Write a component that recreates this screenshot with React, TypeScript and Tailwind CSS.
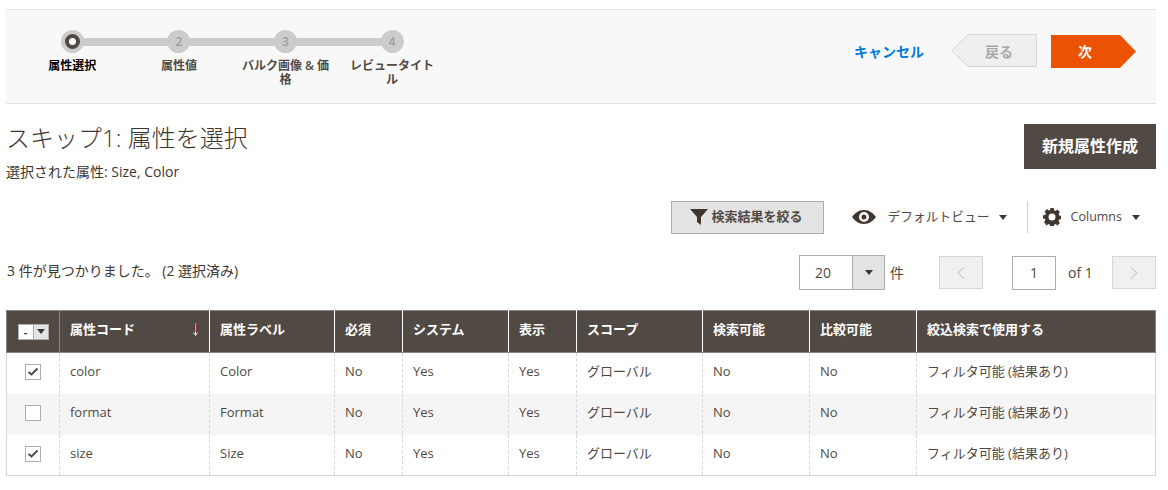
import { ChevronLeft, ChevronRight } from "lucide-react";

const font = "font-['Open_Sans','Noto_Sans_CJK_JP',sans-serif]";

const steps = [
  { n: "", label: "属性選択", active: true },
  { n: "2", label: "属性値" },
  { n: "3", label: "バルク画像 & 価格" },
  { n: "4", label: "レビュータイトル" },
];

const columns = [
  { label: "属性コード", width: "w-[150px]" },
  { label: "属性ラベル", width: "w-[125px]" },
  { label: "必須", width: "w-[68px]" },
  { label: "システム", width: "w-[106px]" },
  { label: "表示", width: "w-[68px]" },
  { label: "スコープ", width: "w-[126px]" },
  { label: "検索可能", width: "w-[107px]" },
  { label: "比較可能", width: "w-[107px]" },
  { label: "絞込検索で使用する", width: "w-[239px]" },
];

const rows = [
  { code: "color", label: "Color", checked: true },
  { code: "format", label: "Format", checked: false },
  { code: "size", label: "Size", checked: true },
];

const Caret = ({ className = "" }: { className?: string }) => (
  <span
    className={`inline-block h-0 w-0 border-x-[4px] border-t-[5px] border-x-transparent border-t-[#41362f] ${className}`}
  />
);

const Stepper = () => (
  <ol className="flex w-[450px] pl-[13px]">
    {steps.map((step, index) => (
      <li key={step.label} className="relative flex w-[106.6px] shrink-0 flex-col items-center">
        {index < steps.length - 1 && (
          <span className="absolute top-[8px] left-1/2 h-[8px] w-full bg-[#cccccc]" />
        )}
        <span className="relative flex h-[23px] w-[23px] items-center justify-center rounded-full bg-[#cccccc] text-[12px] font-semibold text-[#a09c99]">
          {step.active ? (
            <span className="h-[15px] w-[15px] rounded-full border-[4px] border-[#514943] bg-white" />
          ) : (
            step.n
          )}
        </span>
        <span
          className={`mt-[6px] w-[92px] text-center text-[12px] leading-[14px] font-semibold ${
            step.active ? "text-[#000000]" : "text-[#514943]"
          }`}
        >
          {step.label}
        </span>
      </li>
    ))}
  </ol>
);

const Wizard = () => (
  <div className="flex h-[95px] items-start justify-between border-y border-[#e3e3e3] bg-[#f8f8f8] pt-[20px] pr-[19px]">
    <Stepper />
    <div className="flex items-center pt-[4px]">
      <span className="mr-[27px] text-[14px] font-semibold text-[#007bdb]">キャンセル</span>
      <svg width="86" height="34" viewBox="0 0 86 34" className="-mr-[86px]">
        <path d="M17 .5H85.500V32.500H17L.5 16.500Z" fill="#efefef" stroke="#d6d6d6" />
      </svg>
      <span className="relative w-[86px] pl-[10px] text-center text-[14px] font-semibold text-[#a8a8a8]">戻る</span>
      <svg width="86" height="33" viewBox="0 0 86 33" className="ml-[14px] -mr-[86px]">
        <path d="M0 0H69L85 16.500L69 33H0Z" fill="#eb5202" />
      </svg>
      <span className="relative w-[86px] pr-[18px] text-center text-[14px] font-semibold text-white">次</span>
    </div>
  </div>
);

const Toolbar = () => (
  <div className="mt-[18px] flex h-[34px] items-center justify-end pr-[28px]">
    <button className="flex h-[33px] w-[153px] items-center justify-center gap-[4px] border border-[#adadad] bg-[#e3e3e3] pr-[2px] text-[13px] font-semibold text-[#514943]">
      <svg width="18" height="16" viewBox="0 0 18 16">
        <path d="M0 0H18L11 8V16L7 13V8Z" fill="#41362f" />
      </svg>
      検索結果を絞る
    </button>
    <svg width="24" height="14" viewBox="0 0 24 14" className="ml-[28px]">
      <path
        fillRule="evenodd"
        d="M12 0C6.500 0 2.500 3.500 0 7c2.500 3.500 6.500 7 12 7s9.500-3.500 12-7C21.500 3.500 17.500 0 12 0Zm0 2a5 5 0 1 1 0 10 5 5 0 0 1 0-10Zm0 2.500a2.500 2.500 0 1 0 0 5 2.500 2.500 0 0 0 0-5Z"
        fill="#41362f"
      />
    </svg>
    <span className="ml-[12px] text-[12.750px] text-[#514943]">デフォルトビュー</span>
    <Caret className="ml-[9px]" />
    <span className="mr-[15px] ml-[20px] h-[32px] w-px bg-[#d1d1d1]" />
    <svg width="18" height="18" viewBox="0 0 18 18">
      <path
        fillRule="evenodd"
        d="M7.300 0h3.400l.4 2.300 1.500.6L14.500 1.600l2.400 2.400-1.300 1.900.6 1.500 2.300.4v3.400l-2.300.4-.6 1.500 1.300 1.900-2.400 2.400-1.900-1.300-1.500.6-.4 2.300H7.300l-.4-2.300-1.500-.6-1.900 1.300L1.100 14l1.300-1.900-.6-1.500L0 10.700V7.300l2.300-.4.6-1.500L1.600 3.500 4 1.100l1.900 1.300 1.500-.6ZM9 5.500a3.500 3.500 0 1 0 0 7 3.500 3.500 0 0 0 0-7Z"
        fill="#41362f"
      />
    </svg>
    <span className="ml-[10px] text-[12.500px] text-[#514943]">Columns</span>
    <Caret className="ml-[10px]" />
  </div>
);

const Pager = () => (
  <div className="mt-[21px] flex h-[35px] items-center justify-between pr-[12px] text-[14px] text-[#41362f]">
    <span className="pb-[4px] pl-[1px]">3 件が見つかりました。 (2 選択済み)</span>
    <div className="flex items-center">
      <div className="flex h-[35px] w-[86px] border border-[#adadad] bg-white">
        <span className="flex-1 pt-[6px] pl-[15px] text-[#514943]">20</span>
        <span className="flex w-[32px] items-center justify-center border-l border-[#adadad] bg-[#e3e3e3]">
          <Caret />
        </span>
      </div>
      <span className="ml-[5px] text-[#514943]">件</span>
      <span className="ml-[35px] flex h-[33px] w-[44px] items-center justify-center border border-[#d6d6d6] bg-[#f0f0f0]">
        <ChevronLeft size={22} strokeWidth={1} className="text-[#b0b0b0]" />
      </span>
      <span className="ml-[29px] flex h-[34px] w-[44px] items-center justify-center border border-[#adadad] bg-white text-[#514943]">
        1
      </span>
      <span className="ml-[12px] w-[44px] text-[#514943]">of 1</span>
      <span className="flex h-[33px] w-[44px] items-center justify-center border border-[#d6d6d6] bg-[#f0f0f0]">
        <ChevronRight size={22} strokeWidth={1} className="text-[#b0b0b0]" />
      </span>
    </div>
  </div>
);

const Check = ({ checked }: { checked: boolean }) => (
  <span className="mx-auto flex h-[16px] w-[16px] items-center justify-center border border-[#adadad] bg-white">
    {checked && (
      <svg width="12" height="10" viewBox="0 0 12 10">
        <path d="M1.500 5L4.500 7.500L10.500 1.500" fill="none" stroke="#514943" strokeWidth="2" />
      </svg>
    )}
  </span>
);

const Grid = () => (
  <table className="mt-[20px] w-[1149px] table-fixed border-collapse text-[13px]">
    <thead>
      <tr className="h-[42px] bg-[#514943]">
        <th className="w-[53px] border border-[#8a837f] align-middle">
          <span className="mx-auto flex h-[16px] w-[31px] border border-[#adadad] bg-white">
            <span className="flex-1 text-[11px] leading-[14px] font-bold text-[#41362f]">-</span>
            <span className="flex w-[15px] items-center justify-center border-l border-[#adadad] bg-[#e3e3e3]">
              <Caret />
            </span>
          </span>
        </th>
        {columns.map((col, index) => (
          <th
            key={col.label}
            className={`${col.width} relative border-x border-x-[#ffffff] border-y border-y-[#8a837f] pb-[4px] pl-[10px] text-left text-[13px] font-bold text-white last:border-r-[#8a837f]`}
          >
            {col.label}
            {index === 0 && (
              <svg width="5" height="13" viewBox="0 0 5 13" className="absolute top-[12px] right-[11px]">
                <path d="M2.500 0V12M.5 9.500L2.500 12.500L4.500 9.500" fill="none" stroke="#e8e8e8" strokeWidth="1" />
                <path d="M3 0V9" stroke="#e22626" strokeWidth="1" />
              </svg>
            )}
          </th>
        ))}
      </tr>
    </thead>
    <tbody>
      {rows.map((row, index) => (
        <tr key={row.code} className={`h-[41px] ${index === 1 ? "bg-[#f5f5f5]" : "bg-white"}`}>
          <td
            className={`border-r border-b border-l border-r-[#d6d6d6] border-l-[#d6d6d6] pb-[3px] [border-right-style:dashed] ${
              index === 2 ? "border-b-[#d6d6d6]" : "border-b-transparent"
            }`}
          >
            <Check checked={row.checked} />
          </td>
          {[row.code, row.label, "No", "Yes", "Yes", "グローバル", "No", "No", "フィルタ可能 (結果あり)"].map((cell, i) => (
            <td
              key={i}
              className={`border-r border-b border-r-[#d6d6d6] pb-[3px] pl-[10px] text-[#514943] [border-bottom-style:solid] ${
                i === 8 ? "" : "[border-right-style:dashed]"
              } ${index === 2 ? "border-b-[#d6d6d6]" : "border-b-transparent"}`}
            >
              {cell}
            </td>
          ))}
        </tr>
      ))}
    </tbody>
  </table>
);

export default function App() {
  return (
    <div className={`h-[490px] w-[1168px] overflow-hidden bg-white pt-[9px] pl-[6px] ${font}`}>
      <div className="pr-[12px]">
        <Wizard />
      </div>
      <div className="mt-[20px] flex items-start justify-between pr-[12px]">
        <div>
          <h1 className="-mt-[1px] text-[24px] leading-[30px] font-light text-[#41362f]">スキップ1: 属性を選択</h1>
          <p className="mt-[9px] text-[14px] leading-[20px] text-[#41362f]">選択された属性: Size, Color</p>
        </div>
        <button className="h-[45px] w-[132px] bg-[#514943] pb-[1px] text-[16px] font-bold text-white">新規属性作成</button>
      </div>
      <Toolbar />
      <Pager />
      <Grid />
    </div>
  );
}
